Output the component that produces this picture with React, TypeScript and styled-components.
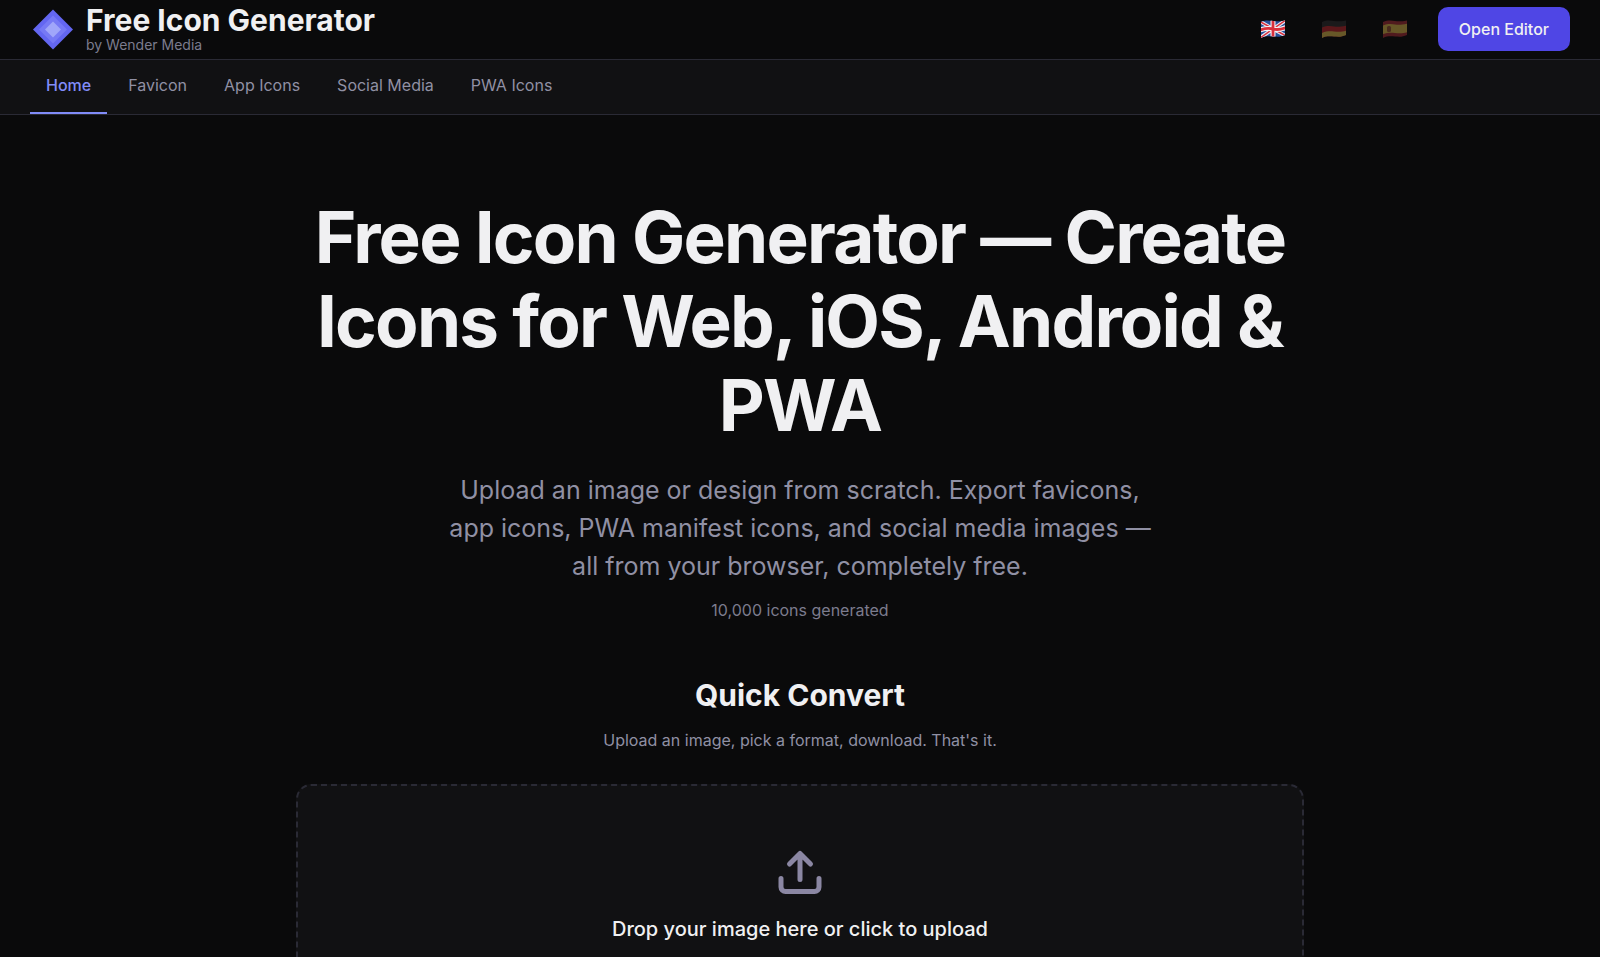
import React from "react";
import styled, { createGlobalStyle } from "styled-components";

const colors = {
  page: "#0a0a0b",
  panel: "#111113",
  border: "#2a2a35",
  text: "#f0f0f2",
  muted: "#9090a4",
  faint: "#7c7c8e",
  accent: "#818cf8",
  primary: "#4f46e5",
};

const GlobalStyle = createGlobalStyle`
  *, *::before, *::after { box-sizing: border-box; }
  html { background: ${colors.page}; }
  body {
    margin: 0;
    overflow-x: hidden;
    background: ${colors.page};
    color: ${colors.text};
    font-family: Inter, "Liberation Sans", sans-serif;
    font-size: 16px;
    line-height: 26px;
  }
  h1, h2, p { margin: 0; }
  button { font: inherit; }
  ::-webkit-scrollbar { display: none; }
`;

const Header = styled.header`
  display: flex;
  align-items: center;
  justify-content: space-between;
  height: 60px;
  padding: 0 30px 1px;
  border-bottom: 1px solid ${colors.border};
`;

const Brand = styled.a`
  display: flex;
  align-items: center;
  gap: 10px;
  color: inherit;
  text-decoration: none;
`;

const BrandText = styled.span`
  display: flex;
  flex-direction: column;
`;

const BrandName = styled.span`
  font-size: 30px;
  font-weight: 700;
  line-height: 32px;
`;

const BrandOwner = styled.span`
  color: ${colors.faint};
  font-size: 14px;
  line-height: 18px;
`;

const Actions = styled.div`
  display: flex;
  align-items: center;
  gap: 15px;
`;

const Languages = styled.div`
  display: flex;
  gap: 5px;
`;

const LanguageButton = styled.button<{ $active?: boolean }>`
  display: flex;
  align-items: center;
  justify-content: center;
  width: 56px;
  height: 44px;
  padding: 0;
  border: 0;
  background: none;
  opacity: ${(p) => (p.$active ? 1 : 0.4)};
  cursor: pointer;
`;

const PrimaryLink = styled.a`
  padding: 9px 21px;
  border-radius: 10px;
  background: ${colors.primary};
  color: ${colors.text};
  font-weight: 500;
  text-decoration: none;
`;

const Nav = styled.nav`
  display: flex;
  gap: 5px;
  height: 55px;
  padding: 0 30px;
  border-bottom: 1px solid ${colors.border};
  background: ${colors.panel};
`;

const NavLink = styled.a<{ $active?: boolean }>`
  padding: 12px 16px;
  border-bottom: 2px solid ${(p) => (p.$active ? colors.accent : "transparent")};
  color: ${(p) => (p.$active ? colors.accent : colors.muted)};
  font-weight: ${(p) => (p.$active ? 500 : 400)};
  text-decoration: none;
`;

const Main = styled.main`
  display: flex;
  flex-direction: column;
  align-items: center;
  padding: 80px 30px;
  text-align: center;
`;

const Title = styled.h1`
  max-width: 1008px;
  font-size: 71px;
  font-weight: 700;
  line-height: 84px;
  letter-spacing: -0.025em;
`;

const Lead = styled.p`
  max-width: 720px;
  margin-top: 24px;
  color: ${colors.muted};
  font-size: 25px;
  line-height: 38px;
`;

const Counter = styled.p`
  margin-top: 12px;
  color: ${colors.faint};
`;

const Converter = styled.section`
  width: 100%;
  max-width: 1008px;
  margin-top: 52px;
`;

const SectionTitle = styled.h2`
  font-size: 30px;
  font-weight: 700;
  line-height: 40px;
`;

const SectionText = styled.p`
  margin-top: 12px;
  color: ${colors.muted};
`;

const DropZone = styled.button`
  display: flex;
  flex-direction: column;
  align-items: center;
  gap: 16px;
  width: 100%;
  margin-top: 31px;
  padding: 61px 30px;
  border: 2px dashed ${colors.border};
  border-radius: 15px;
  background: ${colors.panel};
  color: ${colors.text};
  font-size: 20px;
  font-weight: 500;
  line-height: 32px;
  cursor: pointer;
`;

const LogoMark = () => (
  <svg width="46" height="46" viewBox="0 0 46 46" aria-hidden="true">
    <path d="M23 3.500 43 23.500 23 43.500 3 23.500Z" fill="#6366f1" />
    <path d="M23 9.500 37 23.500 23 37.500 9 23.500Z" fill="#7679f5" />
    <path d="M23 15.500 31 23.500 23 31.500 15 23.500Z" fill="#a0a6fa" />
  </svg>
);

const wave = "M1 3C6 0.500 10 1.500 13 2S20 2.500 25 1.500V16C20 18.500 16 17.500 13 17.500S6 16.500 1 19Z";

const FlagShape = ({ id, children }: { id: string; children: React.ReactNode }) => (
  <svg width="26" height="20" viewBox="0 0 26 20" aria-hidden="true">
    <clipPath id={id}>
      <path d={wave} />
    </clipPath>
    <g clipPath={`url(#${id})`}>{children}</g>
  </svg>
);

const FlagGB = () => (
  <FlagShape id="flag-gb">
    <rect width="26" height="20" fill="#27509b" />
    <path d="M0 2.500 26 17M26 1 0 19" stroke="#e8e8f0" strokeWidth="3.600" />
    <path d="M0 2.500 26 17M26 1 0 19" stroke="#d82f3c" strokeWidth="1.500" />
    <path d="M13 0V20M0 11Q7 8.500 13 10T26 8.500" fill="none" stroke="#f3f3f6" strokeWidth="5" />
    <path d="M13 0V20M0 11Q7 8.500 13 10T26 8.500" fill="none" stroke="#d82f3c" strokeWidth="2.800" />
  </FlagShape>
);

const FlagDE = () => (
  <FlagShape id="flag-de">
    <rect width="26" height="20" fill="#343434" />
    <path d="M0 9C6 6 10 7 13 7.500S20 8 26 6.500V20H0Z" fill="#d02c31" />
    <path d="M0 14.500C6 11.500 10 12.500 13 12.500S20 13.500 26 11.500V20H0Z" fill="#f2ce55" />
  </FlagShape>
);

const FlagES = () => (
  <FlagShape id="flag-es">
    <rect width="26" height="20" fill="#b8323c" />
    <path d="M0 7C6 4 10 5 13 5.500S20 6 26 4.500V13C20 15 16 14 13 14S6 13 0 15.500Z" fill="#f0c951" />
    <rect x="5" y="7" width="4" height="6" rx="1.500" fill="#a85d3c" />
  </FlagShape>
);

const UploadIcon = () => (
  <svg
    width="50"
    height="50"
    viewBox="0 0 50 50"
    fill="none"
    stroke="#8b87a3"
    strokeWidth="5"
    strokeLinecap="round"
    strokeLinejoin="round"
    aria-hidden="true"
  >
    <path d="M44 31.500v8.500a4.500 4.500 0 0 1-4.500 4.500h-29A4.500 4.500 0 0 1 6 40v-8.500" />
    <path d="M35.500 17 25 6.500 14.500 17M25 6.500v26" />
  </svg>
);

const languages = [
  { label: "English", Flag: FlagGB },
  { label: "Deutsch", Flag: FlagDE },
  { label: "Español", Flag: FlagES },
];

const pages = ["Home", "Favicon", "App Icons", "Social Media", "PWA Icons"];

export default function App() {
  return (
    <>
      <GlobalStyle />
      <Header>
        <Brand href="#">
          <LogoMark />
          <BrandText>
            <BrandName>Free Icon Generator</BrandName>
            <BrandOwner>by Wender Media</BrandOwner>
          </BrandText>
        </Brand>
        <Actions>
          <Languages>
            {languages.map(({ label, Flag }, i) => (
              <LanguageButton key={label} type="button" aria-label={label} $active={i === 0}>
                <Flag />
              </LanguageButton>
            ))}
          </Languages>
          <PrimaryLink href="#editor">Open Editor</PrimaryLink>
        </Actions>
      </Header>
      <Nav>
        {pages.map((page, i) => (
          <NavLink key={page} href="#" $active={i === 0}>
            {page}
          </NavLink>
        ))}
      </Nav>
      <Main>
        <Title>Free Icon Generator — Create Icons for Web, iOS, Android &amp; PWA</Title>
        <Lead>
          Upload an image or design from scratch. Export favicons, app icons, PWA manifest icons, and
          social media images — all from your browser, completely free.
        </Lead>
        <Counter>10,000 icons generated</Counter>
        <Converter>
          <SectionTitle>Quick Convert</SectionTitle>
          <SectionText>Upload an image, pick a format, download. That's it.</SectionText>
          <DropZone type="button">
            <UploadIcon />
            Drop your image here or click to upload
          </DropZone>
        </Converter>
      </Main>
    </>
  );
}
